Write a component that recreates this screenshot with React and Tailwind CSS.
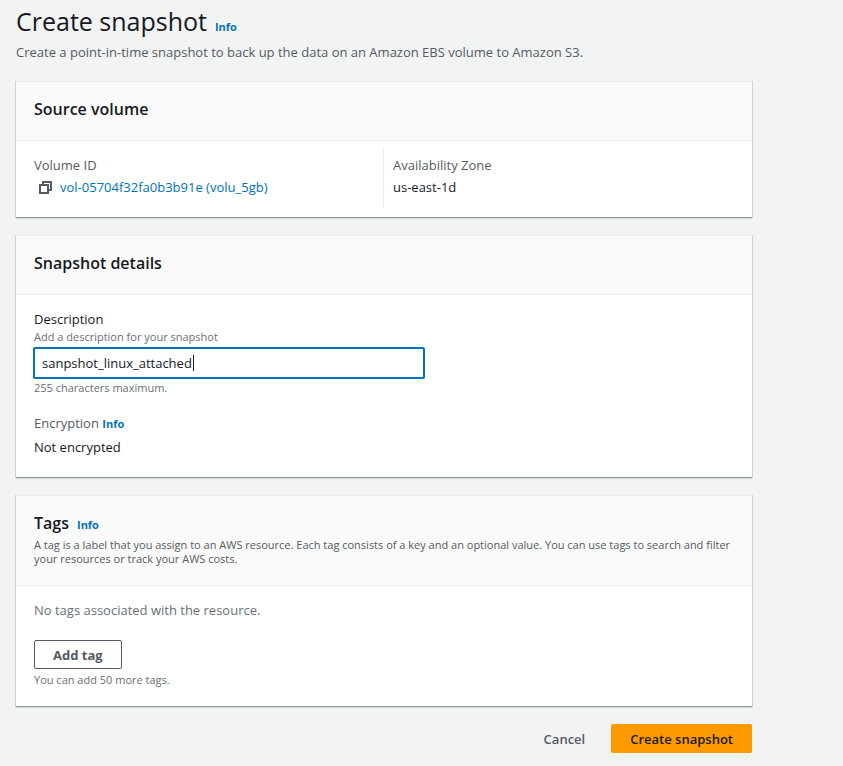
function Info() {
  return <a href="#info" className="text-[11px] leading-none font-bold text-[#0073bb]">Info</a>;
}

function Card({ title, info, description, children }) {
  return (
    <section className="border-t border-b border-t-[#eaeded] border-b-[#879596] bg-white shadow-[1px_0_0_0_#cfd3d3,-1px_0_0_0_#cfd3d3,0_1px_1px_0_rgba(0,28,36,0.1)]">
      <header className="border-b border-[#eaeded] bg-[#fafafa] px-[18px] pt-[15px] pb-[19px]">
        <div className="flex items-baseline gap-2">
          <h2 className="text-[16px] leading-6 font-semibold">{title}</h2>
          {info && <Info />}
        </div>
        {description && <p className="mt-[3px] text-[11px] leading-[14px] text-[#545b64]">{description}</p>}
      </header>
      {children}
    </section>
  );
}

export default function App() {
  return (
    <div className="min-h-screen bg-[#f2f3f3] px-4 pt-[7px] font-['Open_Sans',sans-serif] text-[13px] leading-[22px] text-[#16191f]">
      <main className="max-w-[736px]">
        <div className="flex items-baseline gap-2">
          <h1 className="text-[25px] leading-7">Create snapshot</h1>
          <Info />
        </div>
        <p className="mt-[6px] text-[#545b64]">Create a point-in-time snapshot to back up the data on an Amazon EBS volume to Amazon S3.</p>
        <form className="mt-[18px] flex flex-col gap-[17px]" onSubmit={(e) => e.preventDefault()}>
          <Card title="Source volume">
            <dl className="grid grid-cols-2 px-[18px] pt-[6px] pb-[10px]">
              <div className="pt-[7px] pb-[9px]">
                <dt className="text-[#545b64]">Volume ID</dt>
                <dd className="flex items-center gap-2 pl-1">
                  <button type="button" aria-label="Copy volume ID" className="text-[#545b64]">
                    <svg width="14" height="14" viewBox="0 0 14 14" fill="none" stroke="currentColor" strokeWidth="2">
                      <path d="M2 5h8v8H2zM5 5V2h8v8h-3" />
                    </svg>
                  </button>
                  <a href="#volume" className="text-[#0073bb]">vol-05704f32fa0b3b91e (volu_5gb)</a>
                </dd>
              </div>
              <div className="-ml-px border-l border-[#eaeded] pt-[7px] pb-[9px] pl-[9px]">
                <dt className="text-[#545b64]">Availability Zone</dt>
                <dd>us-east-1d</dd>
              </div>
            </dl>
          </Card>
          <Card title="Snapshot details">
            <div className="px-[18px] pt-[13px] pb-[19px]">
              <label htmlFor="description" className="block">Description</label>
              <p id="hint" className="text-[11px] leading-[14px] text-[#687078]">Add a description for your snapshot</p>
              <div className="relative -mx-px mt-[3px] max-w-[392px]">
                <input id="description" aria-describedby="hint" defaultValue="sanpshot_linux_attached" className="block h-8 w-full rounded-xs border-2 border-[#0073bb] bg-white px-[7px] caret-transparent outline-none" />
                <span aria-hidden="true" className="pointer-events-none absolute top-2 left-40 h-4 w-px bg-[#16191f]" />
              </div>
              <p className="mt-[2px] text-[11px] leading-[14px] text-[#687078]">255 characters maximum.</p>
              <p className="mt-[17px] text-[#545b64]">Encryption <Info /></p>
              <p className="mt-[2px]">Not encrypted</p>
            </div>
          </Card>
          <Card title="Tags" info description="A tag is a label that you assign to an AWS resource. Each tag consists of a key and an optional value. You can use tags to search and filter your resources or track your AWS costs.">
            <div className="px-[18px] pt-[13px] pb-[19px]">
              <p className="text-[#687078]">No tags associated with the resource.</p>
              <button type="button" className="mt-[19px] block h-[29px] rounded-xs border border-[#545b64] bg-white px-[18px] font-bold text-[#545b64]">Add tag</button>
              <p className="mt-1 text-[11px] leading-[14px] text-[#687078]">You can add 50 more tags.</p>
            </div>
          </Card>
          <div className="flex justify-end gap-2">
            <button type="button" className="h-[29px] px-[18px] font-semibold text-[#545b64]">Cancel</button>
            <button type="submit" className="h-[29px] rounded-xs bg-[#ff9900] px-[19px] font-semibold">Create snapshot</button>
          </div>
        </form>
      </main>
    </div>
  );
}
